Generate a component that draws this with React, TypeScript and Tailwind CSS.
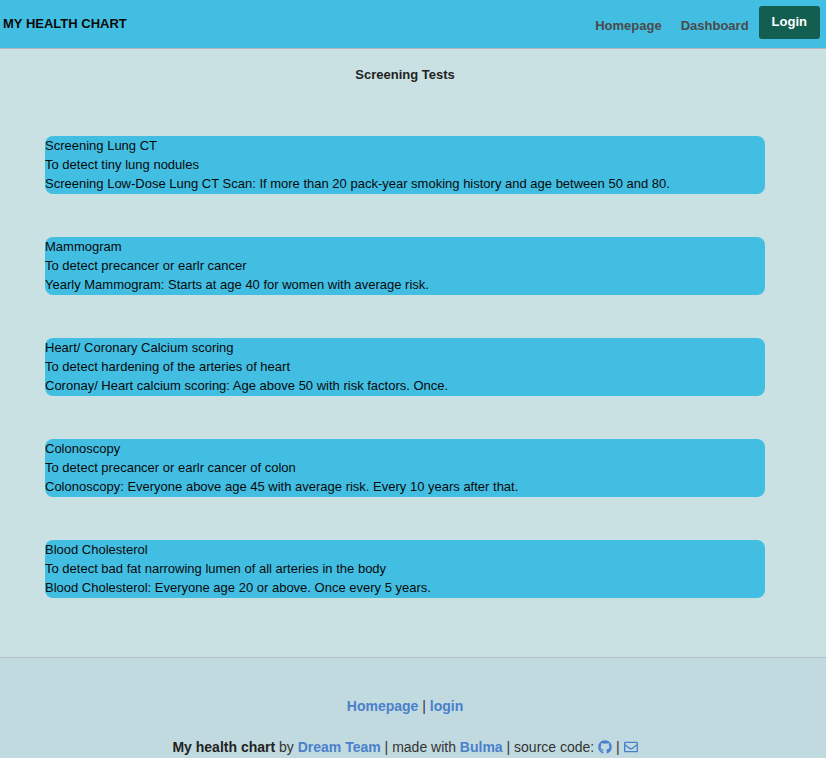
import React from "react";
import { FaGithub, FaRegEnvelope } from "react-icons/fa";

interface ScreeningTest {
  name: string;
  purpose: string;
  guideline: string;
}

const tests: ScreeningTest[] = [
  {
    name: "Screening Lung CT",
    purpose: "To detect tiny lung nodules",
    guideline:
      "Screening Low-Dose Lung CT Scan: If more than 20 pack-year smoking history and age between 50 and 80.",
  },
  {
    name: "Mammogram",
    purpose: "To detect precancer or earlr cancer",
    guideline: "Yearly Mammogram: Starts at age 40 for women with average risk.",
  },
  {
    name: "Heart/ Coronary Calcium scoring",
    purpose: "To detect hardening of the arteries of heart",
    guideline: "Coronay/ Heart calcium scoring: Age above 50 with risk factors. Once.",
  },
  {
    name: "Colonoscopy",
    purpose: "To detect precancer or earlr cancer of colon",
    guideline: "Colonoscopy: Everyone above age 45 with average risk. Every 10 years after that.",
  },
  {
    name: "Blood Cholesterol",
    purpose: "To detect bad fat narrowing lumen of all arteries in the body",
    guideline: "Blood Cholesterol: Everyone age 20 or above. Once every 5 years.",
  },
];

function Header() {
  return (
    <header className="flex h-[49px] items-start justify-between border-b border-[#b9b4bd] bg-[#42bee3] pr-[6px] pl-[3px]">
      <h1 className="pt-[14px] text-[13px] leading-[19px] font-bold text-[#0a0a0a]">MY HEALTH CHART</h1>
      <nav className="flex items-start text-[13px] leading-[19px] font-bold text-[#4a4a4a]">
        <a href="#home" className="mt-[16px] mr-[19px]">Homepage</a>
        <a href="#dashboard" className="mt-[16px] mr-[10px]">Dashboard</a>
        <button type="button" className="mt-[6px] h-[33px] rounded-[3px] bg-[#125e50] px-[13px] pb-[2px] font-bold text-white">
          Login
        </button>
      </nav>
    </header>
  );
}

function TestCard({ name, purpose, guideline }: ScreeningTest) {
  return (
    <li className="rounded-[8px] bg-[#42bee3] pb-px text-[13px] leading-[19px] text-[#0a0a0a]">
      <p>{name}</p>
      <p>{purpose}</p>
      <p>{guideline}</p>
    </li>
  );
}

function Footer() {
  const link = "font-bold text-[#4a80cb]";
  return (
    <footer className="grow border-t border-[#b0bfc4] bg-[#c0dae0] pt-[38px] pr-[16px] text-center text-[14px] leading-[21px] text-[#333333]">
      <p>
        <a href="#home" className={link}>Homepage</a> | <a href="#login" className={link}>login</a>
      </p>
      <p className="mt-[20px]">
        <strong className="text-[#222222]">My health chart</strong> by{" "}
        <a href="#team" className={link}>Dream Team</a> | made with{" "}
        <a href="#bulma" className={link}>Bulma</a> | source code:{" "}
        <a href="#github" aria-label="GitHub" className="text-[#4a80cb]">
          <FaGithub className="inline size-[14px] align-[-2px]" />
        </a>{" "}
        |{" "}
        <a href="#email" aria-label="Email" className="text-[#4a80cb]">
          <FaRegEnvelope className="inline size-[14px] align-[-2px]" />
        </a>
      </p>
    </footer>
  );
}

export default function App() {
  return (
    <div className="flex min-h-screen flex-col bg-[#c9e1e2] font-['Liberation_Sans',Arial,sans-serif]">
      <Header />
      <main className="pr-[16px] pb-[59px]">
        <h2 className="pt-[16px] text-center text-[13px] leading-[19px] font-bold text-[#222222]">Screening Tests</h2>
        <ul className="mx-[45px] mt-[52px] flex flex-col gap-[43px]">
          {tests.map((test) => (
            <TestCard key={test.name} {...test} />
          ))}
        </ul>
      </main>
      <Footer />
    </div>
  );
}
